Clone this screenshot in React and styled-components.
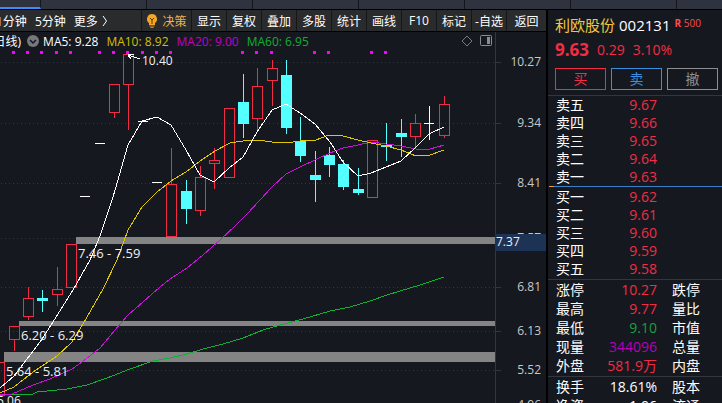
import styled, { createGlobalStyle, css } from "styled-components";

const RED = "#f22c44";
const CYAN = "#54ffff";
const WHITE = "#ffffff";

const tabs = ["t1", "t2", "t3", "t4", "t5", "t6", "t7"];

const tools = ["显示", "复权", "叠加", "多股", "统计", "画线", "F10", "标记", "-自选", "返回"];

const averages = [
  { name: "MA5", value: "9.28", color: WHITE },
  { name: "MA10", value: "8.92", color: "#d2c000" },
  { name: "MA20", value: "9.00", color: "#c000c8" },
  { name: "MA60", value: "6.95", color: "#10b030" },
];

// type, centre, high, body top, body bottom, low
const candles = [
  ["up", -1, 362, 362, 395, 395],
  ["up", 14, 326, 326, 339, 351],
  ["up", 28, 287, 298, 316, 320],
  ["down", 42, 290, 298, 301, 312],
  ["up", 57, 267, 289, 294, 306],
  ["up", 71, 244, 244, 287, 287],
  ["flat", 85, 196, 196, 197, 197],
  ["flat", 100, 143, 143, 144, 144],
  ["up", 114, 84, 84, 112, 118],
  ["up", 128, 54, 54, 84, 130],
  ["flat", 143, 121, 121, 122, 122],
  ["flat", 157, 182, 182, 183, 183],
  ["up", 171, 148, 184, 236, 236],
  ["down", 186, 180, 191, 209, 224],
  ["up", 200, 166, 177, 210, 216],
  ["up", 214, 148, 160, 163, 189],
  ["up", 229, 108, 108, 177, 177],
  ["down", 243, 74, 102, 124, 138],
  ["up", 257, 68, 86, 118, 130],
  ["up", 272, 60, 68, 80, 106],
  ["down", 286, 60, 75, 128, 134],
  ["down", 300, 117, 141, 156, 162],
  ["down", 315, 151, 175, 180, 202],
  ["down", 329, 147, 155, 165, 177],
  ["down", 343, 160, 164, 187, 190],
  ["down", 358, 168, 189, 193, 195],
  ["up", 372, 140, 140, 197, 197],
  ["down", 386, 123, 145, 147, 161],
  ["down", 401, 119, 133, 137, 157],
  ["up", 415, 114, 123, 136, 149],
  ["flat", 429, 106, 123, 124, 140],
  ["up", 444, 96, 104, 135, 138],
];

const lines = [
  {
    color: "#10b030",
    points:
      "0,394 33,394 37,392 67,389 87,385 107,378 130,369 153,361 170,358 187,354 203,349 223,344 243,338 263,330 280,325 303,319 330,311 350,307 370,301 387,295 400,291 420,285 444,277",
  },
  {
    color: "#c814d8",
    points:
      "0,395 12,394 33,385 50,379 72,369 82,362 100,348 115,330 128,315 143,302 160,287 170,279 187,268 203,255 220,240 236,225 247,214 272,187 286,174 300,167 315,160 330,153 343,148 358,145 371,142 386,144 401,146 416,149 430,149 444,145",
  },
  {
    color: "#e0c800",
    points:
      "0,393 14,387 33,372 57,356 72,342 83,324 103,289 117,260 128,230 142,207 157,192 171,181 186,172 200,161 215,151 230,143 243,141 257,140 272,142 287,143 300,141 316,140 329,135 343,136 358,140 371,143 386,146 401,150 416,156 430,155 444,150",
  },
  {
    color: WHITE,
    points:
      "0,388 14,376 40,342 53,322 73,290 90,260 100,236 113,197 128,145 142,121 157,117 171,125 186,150 200,175 214,182 229,168 243,157 257,132 272,110 286,104 300,113 315,124 330,142 343,162 358,176 371,173 386,167 401,161 415,148 429,134 444,127",
  },
];

const signals = [13, 27, 41, 56, 70, 99, 113, 127, 142, 156, 170, 242, 256, 271, 314, 328, 371, 385];

const gaps = [
  { x: 76, y: 237, height: 7, label: "7.46 - 7.59", labelY: 258 },
  { x: 19, y: 321, height: 5, label: "6.20 - 6.29", labelY: 340 },
  { x: 4, y: 352, height: 10, label: "5.64 - 5.81", labelY: 376 },
];

const axis = [
  [62, "10.27"],
  [123, "9.34"],
  [183, "8.41"],
  [238, "7.57"],
  [287, "6.81"],
  [331, "6.13"],
  [370, "5.52"],
  [405, "4.96"],
];

const sells = [
  ["卖五", "9.67"],
  ["卖四", "9.66"],
  ["卖三", "9.65"],
  ["卖二", "9.64"],
  ["卖一", "9.63"],
];

const buys = [
  ["买一", "9.62"],
  ["买二", "9.61"],
  ["买三", "9.60"],
  ["买四", "9.59"],
  ["买五", "9.58"],
];

const stats = [
  ["涨停", "10.27", RED, "跌停"],
  ["最高", "9.77", RED, "量比"],
  ["最低", "9.10", "#16a040", "市值"],
  ["现量", "344096", "#b400b8", "总量"],
  ["外盘", "581.9万", RED, "内盘"],
];

const shares = [
  ["换手", "18.61%", WHITE, "股本"],
  ["净资", "1.06", WHITE, "流通"],
];

const Candle = ({ data: [type, x, high, top, bottom, low] }) => {
  const color = { up: RED, down: CYAN, flat: WHITE }[type];

  if (type === "up") {
    return (
      <g stroke={color} fill="none">
        <rect x={x - 4.5} y={top + 0.5} width="10" height={bottom - top} />
        {high < top && <path d={`M${x + 0.5} ${high}V${top}`} />}
        {low > bottom && <path d={`M${x + 0.5} ${bottom}V${low}`} />}
      </g>
    );
  }
  return (
    <g fill={color}>
      <rect x={x - 5} y={top} width={type === "flat" ? 10 : 11} height={bottom - top} />
      {low - high > 1 && <rect x={x} y={high} width="1" height={low - high} />}
    </g>
  );
};

const Chart = () => (
  <ChartSvg viewBox="0 50 546 353" role="img" aria-label="日线">
    <g shapeRendering="crispEdges">
      {axis.map(([y]) => (
        <g key={y} stroke="#34363e">
          <path d={`M1 ${y + 0.5}H495`} strokeDasharray="1 3" />
          <path d={`M495 ${y + 0.5}H501`} />
        </g>
      ))}
      <path d="M495.5 50V403" stroke="#34363e" />
      {gaps.map((gap) => (
        <rect key={gap.y} x={gap.x} y={gap.y} width={495 - gap.x} height={gap.height} fill="#848484" />
      ))}
      {signals.map((x) => (
        <rect key={x} x={x - 1} y="51" width="3" height="3" fill="#ff00ff" />
      ))}
      {candles.map((data) => (
        <Candle key={data[1]} data={data} />
      ))}
      {lines.map((line) => (
        <polyline key={line.color} points={line.points} fill="none" stroke={line.color} />
      ))}
      <path d="M140 59L128 55M128 55L134 54M128 55L131 59" stroke={WHITE} fill="none" />
    </g>
    <text x="142" y="65">10.40</text>
    {gaps.map((gap) => (
      <GapText key={gap.label} x={gap.x + 2} y={gap.labelY}>
        {gap.label}
      </GapText>
    ))}
    <text x="-3" y="405">5.06</text>
    {axis.map(([y, label]) => (
      <AxisText key={label} x="541" y={y + 4}>
        {label}
      </AxisText>
    ))}
    <rect x="495" y="234" width="51" height="17" fill="#1c3356" />
    <text x="496" y="246">7.37</text>
  </ChartSvg>
);

const Book = ({ rows, label }) => (
  <Table aria-label={label}>
    <tbody>
      {rows.map(([name, price]) => (
        <tr key={name}>
          <Name scope="row">{name}</Name>
          <Value $color={RED}>{price}</Value>
          <td />
        </tr>
      ))}
    </tbody>
  </Table>
);

const Stats = ({ rows, label }) => (
  <Table $roomy aria-label={label}>
    <tbody>
      {rows.map(([name, value, color, other]) => (
        <tr key={name}>
          <Name scope="row">{name}</Name>
          <Value $color={color}>{value}</Value>
          <Other scope="row">{other}</Other>
        </tr>
      ))}
    </tbody>
  </Table>
);

const App = () => (
  <Page>
    <GlobalStyle />
    <TabStrip>
      {tabs.map((tab, i) => (
        <Tab key={tab} $active={i === 0} />
      ))}
    </TabStrip>
    <Main>
      <ChartPanel>
        <Toolbar>
          <Periods>
            <Period>1分钟</Period>
            <Period>5分钟</Period>
            <Period>
              更多
              <svg width="6" height="12" viewBox="0 0 6 12" fill="none" stroke="currentColor">
                <path d="M1 1L4.500 6L1 11" />
              </svg>
            </Period>
          </Periods>
          <Tool $accent>
            <svg width="12" height="14" viewBox="0 0 12 14">
              <path d="M6 0a5 5 0 0 0-3 9v2h6V9a5 5 0 0 0-3-9z" fill="#f5a623" />
              <path d="M4 4l2 2 2-2M6 6v4" stroke="#5a3a08" fill="none" />
              <path d="M3.500 12h5M4.500 13.500h3" stroke="#d88a18" />
            </svg>
            决策
          </Tool>
          {tools.map((tool) => (
            <Tool key={tool}>{tool}</Tool>
          ))}
        </Toolbar>
        <Legend>
          <LegendItems>
            <span>(日线)</span>
            <Indicator aria-label="指标">
              <svg width="12" height="12" viewBox="0 0 12 12">
                <circle cx="6" cy="6" r="6" fill="#77787c" />
                <path d="M3 5l3 3 3-3" stroke="#15181f" strokeWidth="1.500" fill="none" />
              </svg>
            </Indicator>
            <Averages>
              {averages.map((ma) => (
                <Average key={ma.name} $color={ma.color}>
                  {ma.name}: {ma.value}
                </Average>
              ))}
            </Averages>
          </LegendItems>
          <PanelIcons>
            <button aria-label="标记">
              <svg width="12" height="12" viewBox="0 0 12 12" fill="none" stroke="#777980">
                <path d="M6 1l5 5-5 5-5-5z" />
              </svg>
            </button>
            <button aria-label="侧栏">
              <svg width="12" height="12" viewBox="0 0 12 12">
                <rect x="0.500" y="0.500" width="11" height="10" rx="1" fill="none" stroke="#8a8c90" />
                <rect x="7" y="2" width="3" height="7" fill="#8a8c90" />
              </svg>
            </button>
          </PanelIcons>
          <AxisHead />
        </Legend>
        <Chart />
      </ChartPanel>
      <Quote>
        <Header>
          <Title>
            <StockName>利欧股份</StockName>
            <span>002131</span>
            <Badge>
              <b>R</b> 500
            </Badge>
          </Title>
          <Price>
            <strong>9.63</strong>
            <span>0.29</span>
            <span>3.10%</span>
          </Price>
          <Actions>
            <Action $color={RED}>买</Action>
            <Action $color="#3a8fe0">卖</Action>
            <Action $color="#8c8e92">撤</Action>
          </Actions>
        </Header>
        <Book rows={sells} label="卖盘" />
        <Ratio />
        <Book rows={buys} label="买盘" />
        <Rule />
        <Stats rows={stats} label="行情" />
        <Rule />
        <Stats rows={shares} label="股本" />
      </Quote>
    </Main>
  </Page>
);

export default App;

const GlobalStyle = createGlobalStyle`
  * {
    box-sizing: border-box;
  }

  body {
    margin: 0;
    background: #000;
    color: #fff;
    font-family: "Open Sans", "Noto Sans CJK SC", sans-serif;
    font-size: 12px;
    overflow: hidden;
  }

  button {
    margin: 0;
    padding: 0;
    border: 0;
    background: none;
    color: inherit;
    font: inherit;
    cursor: pointer;
  }

  svg {
    display: block;
    flex: none;
  }
`;

const Page = styled.div`
  height: 100vh;
  display: flex;
  flex-direction: column;
  overflow: hidden;
`;

const TabStrip = styled.nav`
  display: flex;
  flex: none;
  height: 10px;
  background: #2f333f;
  border-bottom: 1px solid #000;
`;

const Tab = styled.button`
  flex: none;
  width: 106px;
  border-right: 1px solid #14161c;

  ${(p) =>
    p.$active &&
    css`
      width: 41px;
      border-bottom: 2px solid #3a8cff;
    `}
`;

const Main = styled.main`
  flex: 1;
  min-height: 0;
  display: flex;
  gap: 2px;
`;

const ChartPanel = styled.section`
  flex: 1;
  min-width: 0;
  background: #15181f;
  overflow: hidden;
`;

const Toolbar = styled.div`
  display: flex;
  height: 22px;
  background: #2a2b2d;
  border-bottom: 1px solid #000;
`;

const Periods = styled.div`
  flex: 1;
  min-width: 0;
  display: flex;
  gap: 8px;
  margin-left: -4px;
`;

const Period = styled.button`
  display: flex;
  align-items: center;
  gap: 4px;
  white-space: nowrap;
`;

const Tool = styled.button`
  flex: none;
  display: flex;
  align-items: center;
  justify-content: center;
  gap: 4px;
  width: ${(p) => (p.$accent ? 50 : 35)}px;
  border-left: 1px solid #15161a;
  color: ${(p) => (p.$accent ? "#f0b050" : "inherit")};
  white-space: nowrap;

  &:last-child {
    width: 40px;
  }
`;

const Legend = styled.div`
  display: flex;
  align-items: center;
  height: 18px;
`;

const LegendItems = styled.div`
  flex: 1;
  min-width: 0;
  display: flex;
  align-items: center;
  gap: 4px;
  margin-left: -10px;
  white-space: nowrap;
`;

const Indicator = styled.button`
  flex: none;
  margin-left: 2px;
`;

const Averages = styled.div`
  display: flex;
  gap: 8px;
`;

const Average = styled.span`
  color: ${(p) => p.$color};
`;

const PanelIcons = styled.div`
  display: flex;
  gap: 7px;
  padding-right: 3px;
`;

const AxisHead = styled.div`
  align-self: stretch;
  width: 51px;
  border-left: 1px solid #34363e;
`;

const ChartSvg = styled.svg`
  width: 100%;
  height: auto;
  fill: #f0f0f0;
  font-size: 12px;
`;

const GapText = styled.text`
  font-size: 13px;
`;

const AxisText = styled.text`
  fill: #c8c8c8;
  text-anchor: end;
`;

const Quote = styled.aside`
  flex: none;
  width: 174px;
  background: #15181f;
  font-size: 14px;
  overflow: hidden;
`;

const Header = styled.header`
  padding: 0 4px 5px 7px;
  border-bottom: 1px solid #34363e;
`;

const Title = styled.h1`
  display: flex;
  align-items: center;
  gap: 4px;
  margin: 0;
  font-size: 15px;
  font-weight: 400;
  line-height: 30px;
`;

const StockName = styled.span`
  color: #f0c840;
`;

const Badge = styled.span`
  color: #ff4a4a;
  font-size: 10px;
  line-height: 26px;
  align-self: flex-start;
`;

const Price = styled.div`
  display: flex;
  align-items: center;
  gap: 8px;
  color: ${RED};
  line-height: 20px;

  strong {
    font-size: 17px;
  }
`;

const Actions = styled.div`
  display: grid;
  grid-template-columns: repeat(3, 1fr);
  gap: 5px;
  margin-top: 8px;
`;

const Action = styled.button`
  height: 22px;
  border: 1px solid ${(p) => p.$color};
  color: ${(p) => p.$color};
  line-height: 20px;
`;

const Table = styled.table`
  width: 100%;
  table-layout: fixed;
  border-collapse: collapse;
  line-height: ${(p) => (p.$roomy ? 19 : 18)}px;
  white-space: nowrap;

  th,
  td {
    padding: 0;
    font-weight: 400;
    text-align: left;
  }
`;

const Name = styled.th`
  width: 40px;

  ${Table} & {
    padding-left: 8px;
  }
`;

const Value = styled.td`
  width: 69px;
  color: ${(p) => p.$color};

  ${Table} & {
    text-align: right;
  }
`;

const Other = styled.th`
  ${Table} & {
    padding-left: 15px;
  }
`;

const Ratio = styled.div`
  height: 1px;
  margin: 0 0 1px 1px;
  background: #3a80c8;
  border-left: 5px solid #f0a020;
`;

const Rule = styled.div`
  height: 1px;
  margin-top: 1px;
  background: #34363e;
`;
